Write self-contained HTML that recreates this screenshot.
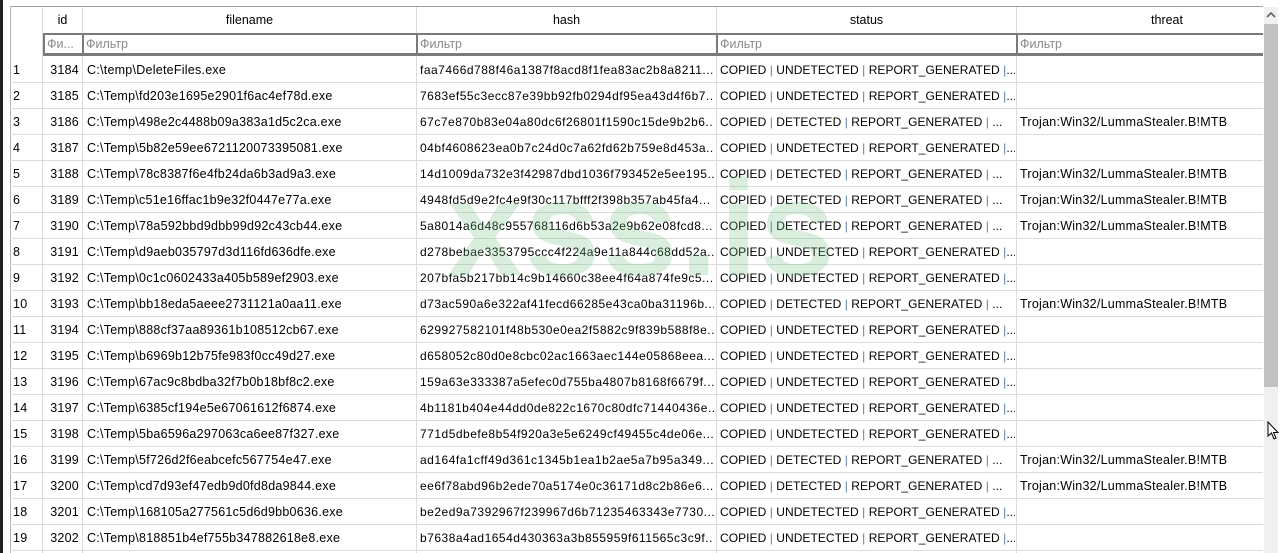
<!DOCTYPE html>
<html><head><meta charset="utf-8"><style>
*{margin:0;padding:0;box-sizing:border-box}
body{width:1280px;height:553px;overflow:hidden;background:#fff;font-family:"Liberation Sans",sans-serif;font-size:12px;color:#000;position:relative}
.a{position:absolute;white-space:nowrap;overflow:hidden}
.vl{position:absolute;width:1px;background:#dcdcdc}
.hl{position:absolute;height:1px;background:#dcdcdc;left:10px;width:1253px}
.f{position:absolute;top:33px;height:22px;border:2px solid #7a7a7a;border-right:none;color:#8a8a8a;padding-left:2px;line-height:18px;overflow:hidden;white-space:nowrap;font-size:12.5px}
.r{position:absolute;left:0;width:1263px;height:26px;line-height:26px;font-size:12.5px;letter-spacing:0.25px}
.r span{position:absolute;top:0;white-space:nowrap;overflow:hidden}
.r span.hs{font-size:12px;letter-spacing:0.5px}
.r span.st{font-size:12px;letter-spacing:0.05px}
.p{color:#5a7fa8}
.wm{position:absolute;left:447px;top:150px;font-size:136px;font-weight:bold;color:rgba(120,195,130,0.28);letter-spacing:2px;font-family:"Liberation Sans",sans-serif}
.hd{font-size:12.5px}
</style></head><body>
<div class="a" style="left:0;top:0;width:3px;height:553px;background:#1e1e1e"></div>
<div class="a" style="left:10px;top:6px;width:1253px;height:1px;background:#a0a0a0"></div>
<div class="a" style="left:10px;top:6px;width:1px;height:547px;background:#b4b4b4"></div>
<div class="vl" style="left:42px;top:7px;height:546px"></div>
<div class="vl" style="left:82px;top:7px;height:546px"></div>
<div class="vl" style="left:416px;top:7px;height:546px"></div>
<div class="vl" style="left:716px;top:7px;height:546px"></div>
<div class="vl" style="left:1016px;top:7px;height:546px"></div>
<div class="a hd" style="left:43px;top:13px;width:39px;text-align:center">id</div>
<div class="a hd" style="left:83px;top:13px;width:333px;text-align:center">filename</div>
<div class="a hd" style="left:417px;top:13px;width:299px;text-align:center">hash</div>
<div class="a hd" style="left:717px;top:13px;width:299px;text-align:center">status</div>
<div class="a hd" style="left:1017px;top:13px;width:300px;text-align:center">threat</div>
<div class="a" style="left:43px;top:54px;width:1220px;height:2px;background:#7a7a7a"></div>
<div class="f" style="left:43px;width:40px">Фи...</div>
<div class="f" style="left:82px;width:335px">Фильтр</div>
<div class="f" style="left:416px;width:301px">Фильтр</div>
<div class="f" style="left:716px;width:301px">Фильтр</div>
<div class="f" style="left:1016px;width:247px">Фильтр</div>
<div class="a" style="left:1264px;top:7px;width:14px;height:546px;background:#f0f0f0"></div>
<div class="a" style="left:1264px;top:24px;width:14px;height:363px;background:#c1c1c1"></div>
<svg class="a" style="left:1266px;top:11px" width="10" height="8"><path d="M1 6 L5 2 L9 6" fill="none" stroke="#606060" stroke-width="1.6"/></svg>
<svg class="a" style="left:1267px;top:421px" width="14" height="20"><path d="M1 1 L1 15 L4.5 12 L7 18 L9 17 L6.5 11.5 L11 11.5 Z" fill="#fff" stroke="#000" stroke-width="1"/></svg>
<div id="rows"></div>
<div class="wm">xss.is</div>
<script>
var d=[
["3184","C:\\temp\\DeleteFiles.exe","faa7466d788f46a1387f8acd8f1fea83ac2b8a8211...",0],
["3185","C:\\Temp\\fd203e1695e2901f6ac4ef78d.exe","7683ef55c3ecc87e39bb92fb0294df95ea43d4f6b7...",0],
["3186","C:\\Temp\\498e2c4488b09a383a1d5c2ca.exe","67c7e870b83e04a80dc6f26801f1590c15de9b2b6...",1],
["3187","C:\\Temp\\5b82e59ee6721120073395081.exe","04bf4608623ea0b7c24d0c7a62fd62b759e8d453a...",0],
["3188","C:\\Temp\\78c8387f6e4fb24da6b3ad9a3.exe","14d1009da732e3f42987dbd1036f793452e5ee195...",1],
["3189","C:\\Temp\\c51e16ffac1b9e32f0447e77a.exe","4948fd5d9e2fc4e9f30c117bfff2f398b357ab45fa4...",1],
["3190","C:\\Temp\\78a592bbd9dbb99d92c43cb44.exe","5a8014a6d48c955768116d6b53a2e9b62e08fcd8...",1],
["3191","C:\\Temp\\d9aeb035797d3d116fd636dfe.exe","d278bebae3353795ccc4f224a9e11a844c68dd52a...",0],
["3192","C:\\Temp\\0c1c0602433a405b589ef2903.exe","207bfa5b217bb14c9b14660c38ee4f64a874fe9c5...",0],
["3193","C:\\Temp\\bb18eda5aeee2731121a0aa11.exe","d73ac590a6e322af41fecd66285e43ca0ba31196b...",1],
["3194","C:\\Temp\\888cf37aa89361b108512cb67.exe","629927582101f48b530e0ea2f5882c9f839b588f8e...",0],
["3195","C:\\Temp\\b6969b12b75fe983f0cc49d27.exe","d658052c80d0e8cbc02ac1663aec144e05868eea...",0],
["3196","C:\\Temp\\67ac9c8bdba32f7b0b18bf8c2.exe","159a63e333387a5efec0d755ba4807b8168f6679f...",0],
["3197","C:\\Temp\\6385cf194e5e67061612f6874.exe","4b1181b404e44dd0de822c1670c80dfc71440436e...",0],
["3198","C:\\Temp\\5ba6596a297063ca6ee87f327.exe","771d5dbefe8b54f920a3e5e6249cf49455c4de06e...",0],
["3199","C:\\Temp\\5f726d2f6eabcefc567754e47.exe","ad164fa1cff49d361c1345b1ea1b2ae5a7b95a349...",1],
["3200","C:\\Temp\\cd7d93ef47edb9d0fd8da9844.exe","ee6f78abd96b2ede70a5174e0c36171d8c2b86e6...",1],
["3201","C:\\Temp\\168105a277561c5d6d9bb0636.exe","be2ed9a7392967f239967d6b71235463343e7730...",0],
["3202","C:\\Temp\\818851b4ef755b347882618e8.exe","b7638a4ad1654d430363a3b855959f611565c3c9f...",0]];
var h="",P='<b class="p" style="font-weight:normal;position:static">|</b>';
for(var i=0;i<d.length;i++){var r=d[i],y=57+i*26;
var st=r[3]?'COPIED '+P+' DETECTED '+P+' REPORT_GENERATED '+P+' ...':'COPIED '+P+' UNDETECTED '+P+' REPORT_GENERATED '+P+'...';
h+='<div class="r" style="top:'+y+'px"><span style="left:13px">'+(i+1)+'</span><span style="left:43px;width:36px;text-align:right">'+r[0]+'</span><span style="left:87px;width:327px">'+r[1]+'</span><span class="hs" style="left:420px;width:294px">'+r[2]+'</span><span class="st" style="left:720px;width:295px">'+st+'</span><span style="left:1020px;width:243px">'+(r[3]?'Trojan:Win32/LummaStealer.B!MTB':'')+'</span></div>';
h+='<div class="hl" style="top:'+(y+25)+'px"></div>';}
document.getElementById('rows').innerHTML=h;
</script>
</body></html>
